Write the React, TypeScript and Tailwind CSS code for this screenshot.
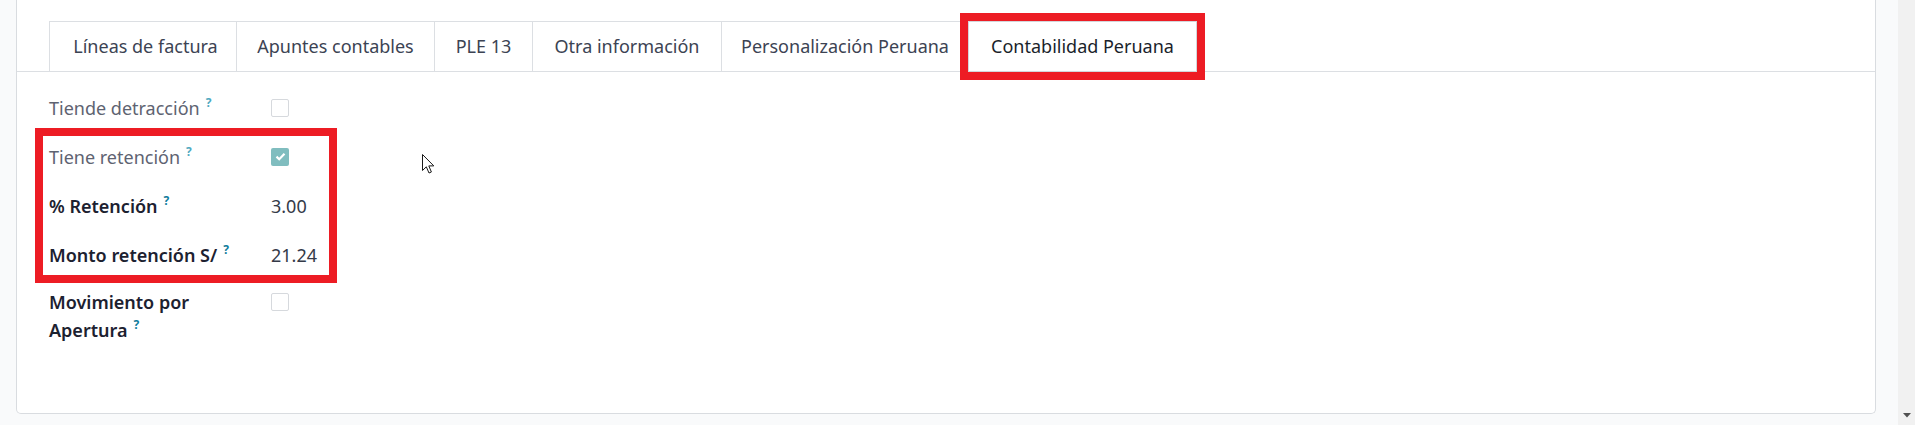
import React from "react";

function Help({ dark }: { dark?: boolean }) {
  return (
    <span
      className={
        "ml-[6px] align-[8px] text-[12px] font-bold leading-none " +
        (dark ? "text-[#0f7c9c]" : "text-[#4fa9c0]")
      }
    >
      ?
    </span>
  );
}

function Checkbox({ checked }: { checked?: boolean }) {
  if (checked) {
    return (
      <div className="flex h-[18px] w-[18px] items-center justify-center rounded-[2px] bg-[#80bdbf]">
        <svg width="11" height="9" viewBox="0 0 11 9">
          <path d="M1.5 4.6 L4.2 7.2 L9.5 1.8" fill="none" stroke="#ffffff" strokeWidth="2.2" />
        </svg>
      </div>
    );
  }
  return <div className="h-[18px] w-[18px] rounded-[2px] border border-[#d6d9dd] bg-white" />;
}

export default function App() {
  return (
    <div className="flex h-[425px] w-full overflow-hidden bg-[#f9fafb] font-['Noto_Sans',sans-serif] text-[18px]">
      <div className="flex flex-1 flex-col pb-[11px] pl-4 pr-[22px]">
        <div className="relative flex-1 rounded-b-[5px] border-x border-b border-[#d9dce0] bg-white">
          <nav className="mt-[21px] flex border-b border-[#dcdfe3] pl-[32px]">
            <div className="flex h-[50px] w-[187px] items-center justify-center border-l border-t border-[#dcdfe3] pl-[5px] text-[#3c4353]">
              Líneas de factura
            </div>
            <div className="flex h-[50px] w-[198px] items-center justify-center border-l border-t border-[#dcdfe3] text-[#3c4353]">
              Apuntes contables
            </div>
            <div className="flex h-[50px] w-[98px] items-center justify-center border-l border-t border-[#dcdfe3] text-[#3c4353]">
              PLE 13
            </div>
            <div className="flex h-[50px] w-[189px] items-center justify-center border-l border-t border-[#dcdfe3] text-[#3c4353]">
              Otra información
            </div>
            <div className="flex h-[50px] w-[247px] items-center justify-center border-l border-t border-[#dcdfe3] text-[#3c4353]">
              Personalización Peruana
            </div>
            <div className="-mb-px flex h-[51px] w-[229px] items-center justify-center border border-[#d3d6da] bg-white text-[#1a1f2b] outline-8 outline-[#ed1c24]">
              Contabilidad Peruana
            </div>
          </nav>

          <div className="flex flex-col pl-[32px] pt-[11px]">
            <div className="flex h-[49px] items-center">
              <div className="w-[222px] shrink-0 pr-4 leading-[28px] text-[#5e6371]">
                Tiende detracción
                <Help />
              </div>
              <Checkbox />
            </div>

            <div className="-ml-[10px] flex w-[294px] flex-col pl-[10px] outline-8 -outline-offset-4 outline-[#ed1c24]">
              <div className="flex h-[49px] items-center">
                <div className="w-[222px] shrink-0 pr-4 leading-[28px] text-[#5e6371]">
                  Tiene retención
                  <Help />
                </div>
                <Checkbox checked />
              </div>
              <div className="flex h-[49px] items-center">
                <div className="w-[222px] shrink-0 pr-4 font-semibold leading-[28px] text-[#1c2130]">
                  % Retención
                  <Help dark />
                </div>
                <div className="leading-[28px] text-[#343a48]">3.00</div>
              </div>
              <div className="flex h-[49px] items-center">
                <div className="w-[222px] shrink-0 pr-4 font-semibold leading-[28px] text-[#1c2130]">
                  Monto retención S/
                  <Help dark />
                </div>
                <div className="leading-[28px] text-[#343a48]">21.24</div>
              </div>
            </div>

            <div className="flex items-start pt-[9px]">
              <div className="w-[222px] shrink-0 pr-4 font-semibold leading-[28px] text-[#1c2130]">
                <div className="w-[180px]">
                  Movimiento por Apertura
                  <Help dark />
                </div>
              </div>
              <div className="pt-[5px]">
                <Checkbox />
              </div>
            </div>
          </div>

          <svg
            className="absolute left-[405px] top-[154px]"
            width="13"
            height="20"
            viewBox="0 0 13 20"
          >
            <path
              d="M0.5 0.5 L0.5 16.5 L4.3 12.8 L7 19 L9.4 18 L6.8 11.9 L11.8 11.9 Z"
              fill="#ffffff"
              stroke="#1a1a1a"
              strokeWidth="1"
            />
          </svg>
        </div>
      </div>
      <div className="flex w-[17px] flex-col items-center justify-end bg-[#f1f1f1] pb-[7px]">
        <svg width="8" height="5" viewBox="0 0 8 5">
          <path d="M0 0 L8 0 L4 4.5 Z" fill="#505050" />
        </svg>
      </div>
    </div>
  );
}
